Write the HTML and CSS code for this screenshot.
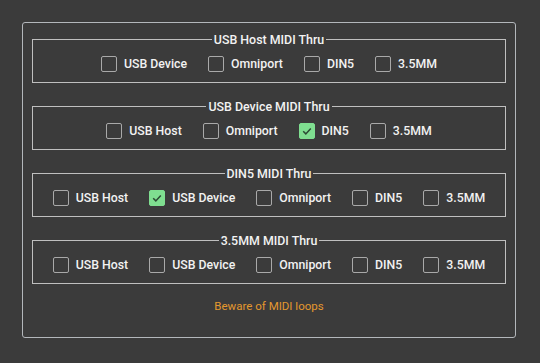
FILE: index.html
```html
<!DOCTYPE html>
<html>
<head>
<meta charset="utf-8">
<link rel="stylesheet" href="styles.css">
</head>
<body>
<div class="panel">
  <fieldset class="group">
    <legend>USB Host MIDI Thru</legend>
    <div class="row">
      <label class="opt"><span class="box"></span>USB Device</label>
      <label class="opt"><span class="box"></span>Omniport</label>
      <label class="opt"><span class="box"></span>DIN5</label>
      <label class="opt"><span class="box"></span>3.5MM</label>
    </div>
  </fieldset>
  <fieldset class="group">
    <legend>USB Device MIDI Thru</legend>
    <div class="row">
      <label class="opt"><span class="box"></span>USB Host</label>
      <label class="opt"><span class="box"></span>Omniport</label>
      <label class="opt"><span class="box checked"><svg viewBox="0 0 16 16" width="16" height="16"><path d="M4.2 8.3 L6.8 10.9 L11.8 5.4" fill="none" stroke="#2b4a33" stroke-width="1.5"/></svg></span>DIN5</label>
      <label class="opt"><span class="box"></span>3.5MM</label>
    </div>
  </fieldset>
  <fieldset class="group">
    <legend>DIN5 MIDI Thru</legend>
    <div class="row">
      <label class="opt"><span class="box"></span>USB Host</label>
      <label class="opt"><span class="box checked"><svg viewBox="0 0 16 16" width="16" height="16"><path d="M4.2 8.3 L6.8 10.9 L11.8 5.4" fill="none" stroke="#2b4a33" stroke-width="1.5"/></svg></span>USB Device</label>
      <label class="opt"><span class="box"></span>Omniport</label>
      <label class="opt"><span class="box"></span>DIN5</label>
      <label class="opt"><span class="box"></span>3.5MM</label>
    </div>
  </fieldset>
  <fieldset class="group">
    <legend>3.5MM MIDI Thru</legend>
    <div class="row">
      <label class="opt"><span class="box"></span>USB Host</label>
      <label class="opt"><span class="box"></span>USB Device</label>
      <label class="opt"><span class="box"></span>Omniport</label>
      <label class="opt"><span class="box"></span>DIN5</label>
      <label class="opt"><span class="box"></span>3.5MM</label>
    </div>
  </fieldset>
  <div class="note">Beware of MIDI loops</div>
</div>
</body>
</html>
```
FILE: styles.css
```css
html, body {
  margin: 0;
  padding: 0;
  background: #3b3b3b;
}
body {
  font-family: Roboto, "Liberation Sans", sans-serif;
  color: #f2f2f2;
}
.panel {
  margin: 22px 0 0 22px;
  width: 474px;
  padding: 9px;
  border: 1px solid #b3b7bb;
  border-radius: 3px;
  display: flex;
  flex-direction: column;
  gap: 16px;
}
.group {
  margin: 0;
  padding: 8px 0 10px;
  border: 1px solid #bfbfbf;
  min-width: 0;
}
.group legend {
  margin: 0 auto;
  padding: 0 2px;
  font-size: 12.4px;
  font-weight: 500;
  line-height: 15px;
}
.row {
  display: flex;
  justify-content: center;
  gap: 21px;
  height: 17px;
  align-items: center;
}
.opt {
  display: flex;
  align-items: center;
  font-size: 12.3px;
  font-weight: 500;
  line-height: 17px;
  padding-top: 2px;
}
.box {
  width: 14px;
  height: 14px;
  border: 1px solid #a9a9a9;
  border-radius: 2px;
  margin-right: 7px;
  margin-top: -2px;
  position: relative;
}
.box.checked {
  background: #7fde90;
  border-color: #7fde90;
}
.box svg {
  position: absolute;
  left: -1px;
  top: -1px;
}
.note {
  margin-top: -1px;
  padding-bottom: 14px;
  text-align: center;
  color: #e3982e;
  font-size: 11.5px;
  line-height: 15px;
}
```
